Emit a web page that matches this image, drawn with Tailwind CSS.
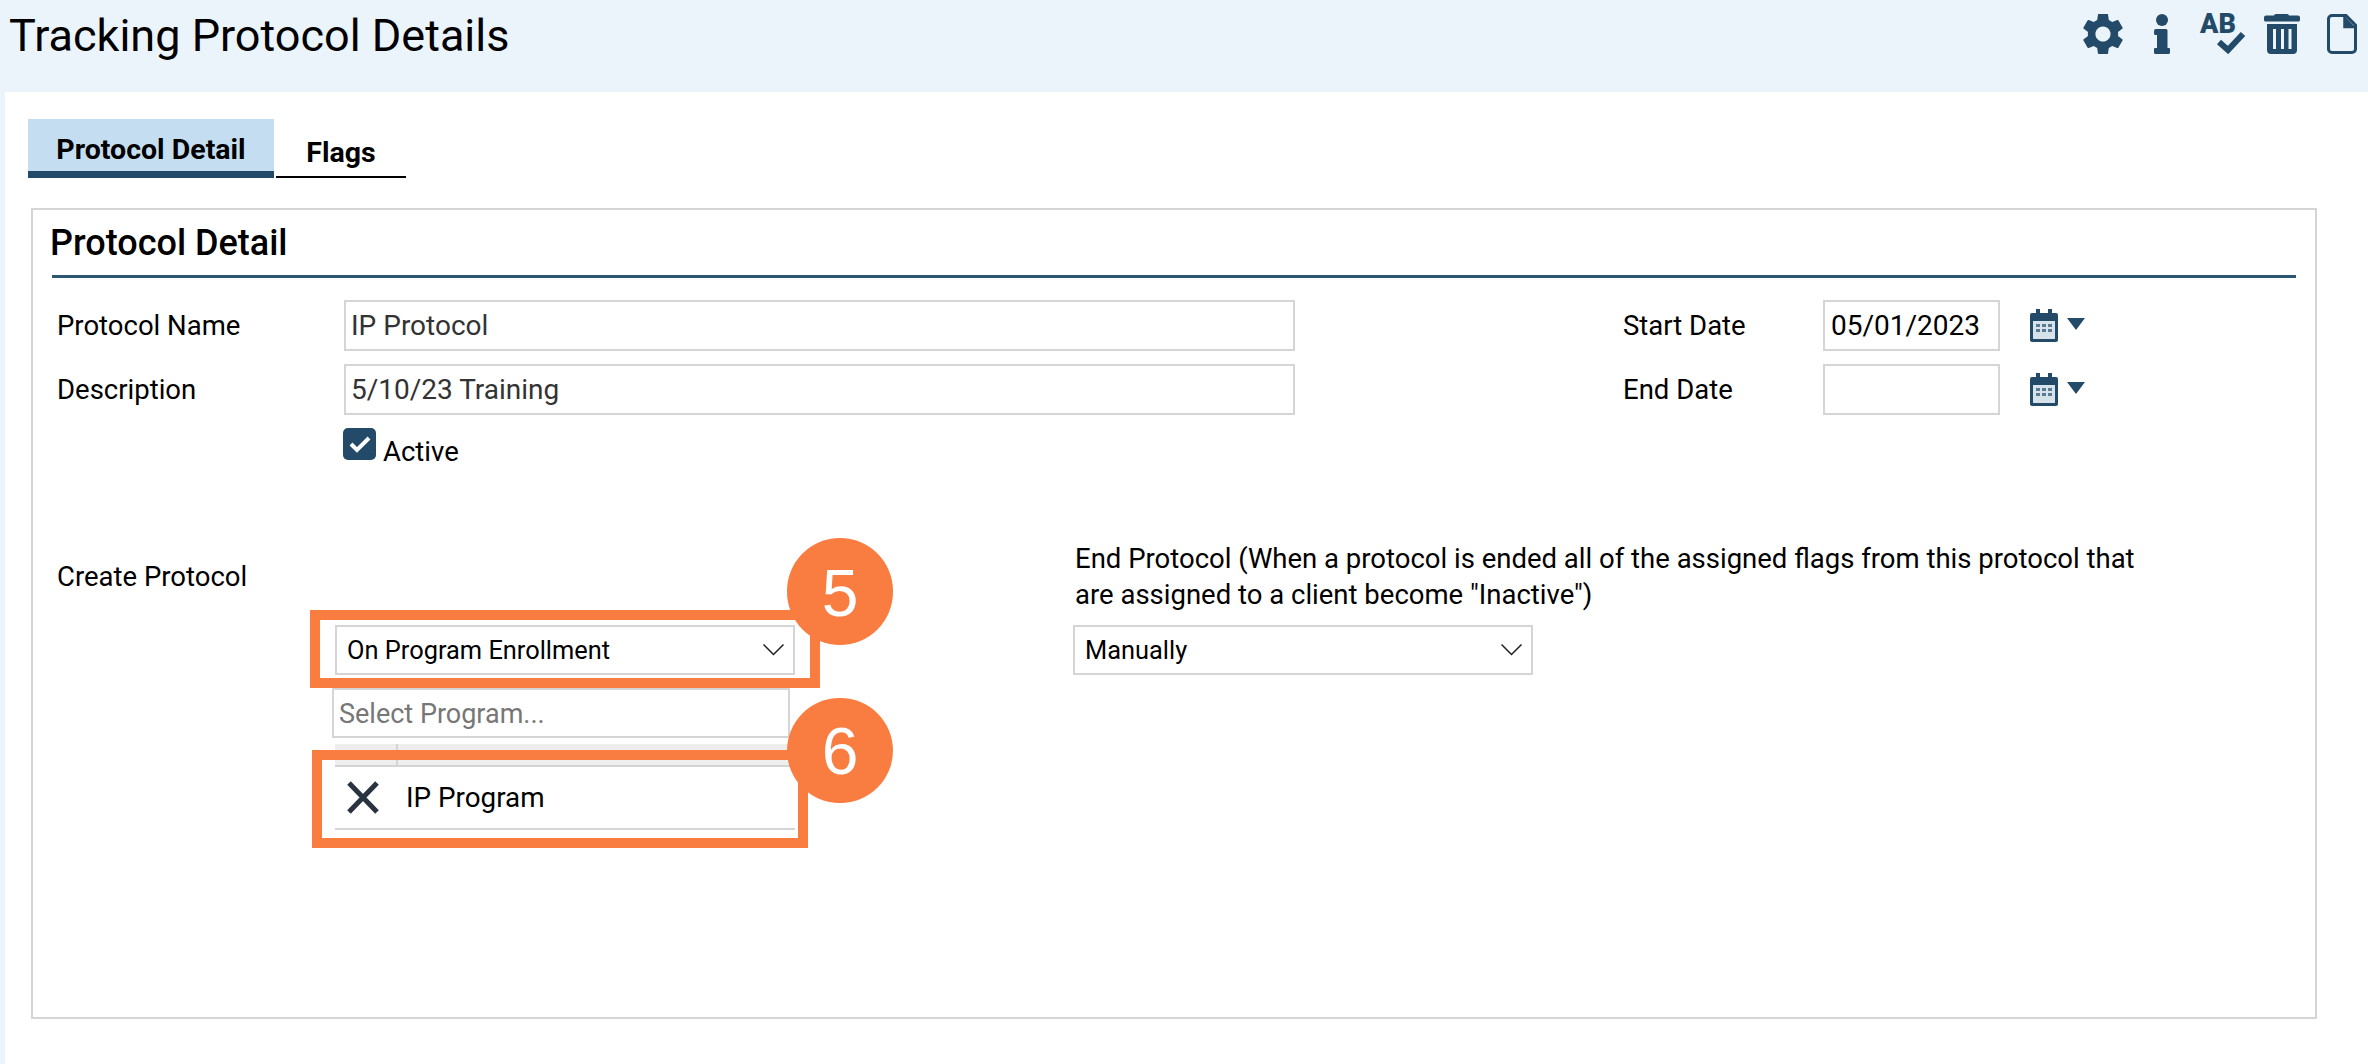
<!DOCTYPE html>
<html lang="en">
<head>
    <meta charset="UTF-8">
    <meta name="viewport" content="width=device-width, initial-scale=1.0">
    <script src="https://cdn.jsdelivr.net/npm/@tailwindcss/browser@4"></script>
    <title>Tracking Protocol Details</title>
</head>

<body class="bg-white">
    <div class="relative h-[1064px] w-[2368px] overflow-hidden bg-white font-['Roboto',sans-serif] text-[27.5px] text-black">
        <!-- page header -->
        <div class="flex h-[92px] items-start justify-between bg-[#ebf4fa] pl-[9px]">
            <h1 class="pt-[11px] text-[45px] leading-[50px]">Tracking Protocol Details</h1>
            <div class="flex pt-[14px] pr-[11px] text-[#234a68]">
                <svg class="h-[40px] w-[40px]" viewBox="2.5 2.5 19 19" fill="currentColor"><path d="M19.14 12.94c.04-.3.06-.61.06-.94 0-.32-.02-.64-.07-.94l2.03-1.58a.49.49 0 0 0 .12-.61l-1.92-3.32a.488.488 0 0 0-.59-.22l-2.39.96c-.5-.38-1.03-.7-1.62-.94l-.36-2.54a.484.484 0 0 0-.48-.41h-3.84c-.24 0-.43.17-.47.41l-.36 2.54c-.59.24-1.13.57-1.62.94l-2.39-.96c-.22-.08-.47 0-.59.22L2.74 8.87c-.12.21-.08.47.12.61l2.03 1.58c-.05.3-.09.63-.09.94s.02.64.07.94l-2.03 1.58a.49.49 0 0 0-.12.61l1.92 3.32c.12.22.37.29.59.22l2.39-.96c.5.38 1.03.7 1.62.94l.36 2.54c.05.24.24.41.48.41h3.84c.24 0 .44-.17.47-.41l.36-2.54c.59-.24 1.13-.56 1.62-.94l2.39.96c.22.08.47 0 .59-.22l1.92-3.32c.12-.22.07-.47-.12-.61l-2.01-1.58zM12 15.6c-1.98 0-3.6-1.62-3.6-3.6s1.62-3.6 3.6-3.6 3.6 1.62 3.6 3.6-1.62 3.6-3.6 3.6z"/></svg>
                <svg class="ml-[31px] h-[40px] w-[16px]" viewBox="0 0 16 40" fill="currentColor"><circle cx="8" cy="6" r="6"/><path d="M2 15h10a1.500 1.500 0 0 1 1.500 1.500V34H15a1 1 0 0 1 1 1v3.500a1.500 1.500 0 0 1-1.500 1.500H1.500A1.500 1.500 0 0 1 0 38.500V35a1 1 0 0 1 1-1h2V21H1.500A1.500 1.500 0 0 1 0 19.500V17a2 2 0 0 1 2-2z"/></svg>
                <div class="relative ml-[30px] h-[40px] w-[45px]">
                    <span class="absolute top-[-4px] left-0 text-[27px] leading-[28px] font-black">AB</span>
                    <svg class="absolute top-[17px] left-[17px] h-[23px] w-[28px]" viewBox="0 0 28 23" fill="none" stroke="currentColor" stroke-width="6"><path d="M2 11l9 8L26 3"/></svg>
                </div>
                <svg class="ml-[19px] h-[40px] w-[36px]" viewBox="0 0 36 40" fill="currentColor"><path d="M12 0h11a2 2 0 0 1 2 1.500h9a2 2 0 0 1 2 2V6a1.500 1.500 0 0 1-1.500 1.500h-33A1.500 1.500 0 0 1 0 6V3.500a2 2 0 0 1 2-2h8A2 2 0 0 1 12 0z"/><path fill-rule="evenodd" d="M3 10h30v26a4 4 0 0 1-4 4H7a4 4 0 0 1-4-4zM9 15v20h3V15zm8 0v20h3V15zm7.500 0v20h3V15z"/></svg>
                <svg class="ml-[27px] h-[40px] w-[30px]" viewBox="0 0 30 40" fill="none" stroke="currentColor" stroke-width="3"><path d="M19 1.500H5A3.500 3.500 0 0 0 1.500 5v30A3.500 3.500 0 0 0 5 38.500h20a3.500 3.500 0 0 0 3.500-3.500V11z"/><path d="M17 1.500V13h11" fill="currentColor" stroke="none"/><path d="M17.500 2v11h11" stroke-width="2.500"/></svg>
            </div>
        </div>

        <div class="h-[972px] border-l-[5px] border-[#ebf4fa] pt-[27px] pl-[23px]">
            <!-- tabs -->
            <div class="flex h-[59px]">
                <div class="flex w-[246px] justify-center border-b-[7px] border-[#234a68] bg-[#c5ddf0] pt-[13px] text-[28.5px] leading-[36px] font-bold">Protocol Detail</div>
                <div class="ml-[2px] flex w-[130px] justify-center border-b-2 border-black pt-[16px] text-[28.5px] leading-[36px] font-bold">Flags</div>
            </div>

            <!-- panel -->
            <div class="mt-[30px] ml-[3px] h-[811px] w-[2286px] border-2 border-[#d5d5d5] pt-[13px]">
                <h2 class="ml-[17px] text-[36px] leading-[40px] font-medium">Protocol Detail</h2>
                <div class="mt-[12px] ml-[19px] h-[3px] w-[2244px] bg-[#2c5573]"></div>

                <div class="mt-[22px] flex h-[51px] items-center">
                    <div class="ml-[24px] w-[287px]">Protocol Name</div>
                    <div class="flex h-[51px] w-[951px] items-center border-2 border-[#d5d5d5] pl-[5px] text-[28px] text-[#333]">IP Protocol</div>
                    <div class="ml-[328px] w-[200px]">Start Date</div>
                    <div class="flex h-[51px] w-[177px] items-center border-2 border-[#d5d5d5] pl-[6px] text-[28px]">05/01/2023</div>
                    <svg class="ml-[30px] h-[33px] w-[28px]" viewBox="0 0 28 33"><path fill="#234a68" d="M2 4h4V0h4v4h8V0h4v4h4a2 2 0 0 1 2 2v25a2 2 0 0 1-2 2H2a2 2 0 0 1-2-2V6a2 2 0 0 1 2-2z"/><rect x="3" y="12" width="22" height="18" fill="#d8e2ea"/><path fill="#5a7a92" d="M6 15h4v3H6zm6 0h4v3h-4zm6 0h4v3h-4zM6 20h4v3H6zm6 0h4v3h-4zm6 0h4v3h-4z"/></svg>
                    <svg class="mt-[-4px] ml-[9px] h-[12px] w-[18px]" viewBox="0 0 18 12" fill="#234a68"><path d="M0 0h18L9 12z"/></svg>
                </div>
                <div class="mt-[13px] flex h-[51px] items-center">
                    <div class="ml-[24px] w-[287px]">Description</div>
                    <div class="flex h-[51px] w-[951px] items-center border-2 border-[#d5d5d5] pl-[5px] text-[28px] text-[#333]">5/10/23 Training</div>
                    <div class="ml-[328px] w-[200px]">End Date</div>
                    <div class="h-[51px] w-[177px] border-2 border-[#d5d5d5]"></div>
                    <svg class="ml-[30px] h-[33px] w-[28px]" viewBox="0 0 28 33"><path fill="#234a68" d="M2 4h4V0h4v4h8V0h4v4h4a2 2 0 0 1 2 2v25a2 2 0 0 1-2 2H2a2 2 0 0 1-2-2V6a2 2 0 0 1 2-2z"/><rect x="3" y="12" width="22" height="18" fill="#d8e2ea"/><path fill="#5a7a92" d="M6 15h4v3H6zm6 0h4v3h-4zm6 0h4v3h-4zM6 20h4v3H6zm6 0h4v3h-4zm6 0h4v3h-4z"/></svg>
                    <svg class="mt-[-4px] ml-[9px] h-[12px] w-[18px]" viewBox="0 0 18 12" fill="#234a68"><path d="M0 0h18L9 12z"/></svg>
                </div>
                <div class="mt-[13px] ml-[310px] flex h-[46px] items-start">
                    <div class="flex h-[32px] w-[33px] items-center justify-center rounded-[5px] bg-[#234a68]">
                        <svg class="h-[18px] w-[22px]" viewBox="0 0 22 18" fill="none" stroke="white" stroke-width="4"><path d="M2 9l6 6L20 3"/></svg>
                    </div>
                    <span class="mt-[6px] ml-[7px] leading-[36px]">Active</span>
                </div>

                <!-- create / end protocol -->
                <div class="mt-[66px] flex">
                    <div class="w-[1040px]">
                        <div class="pt-[19px] pl-[24px] leading-[36px]">Create Protocol</div>
                        <div class="mt-[30px] ml-[302px] flex h-[50px] w-[460px] items-center justify-between border-2 border-[#d5d5d5] pr-[9px] pl-[10px] text-[25.4px]">
                            <span>On Program Enrollment</span>
                            <svg class="h-[12px] w-[21px]" viewBox="0 0 21 12" fill="none" stroke="#222" stroke-width="1.500"><path d="M.5.500l10 10 10-10"/></svg>
                        </div>
                        <div class="mt-[13px] ml-[299px] flex h-[50px] w-[458px] items-center border-2 border-[#d5d5d5] pt-[2px] pl-[5px] text-[27px] text-[#777]">Select Program...</div>
                        <div class="mt-[6px] ml-[302px] flex h-[23px] w-[455px] border-b-2 border-[#d5d5d5] bg-[#eeeeee]">
                            <div class="w-[63px] border-r-2 border-[#d5d5d5]"></div>
                        </div>
                        <div class="ml-[302px] flex h-[63px] w-[460px] items-center border-b-2 border-[#d5d5d5]">
                            <svg class="ml-[12px] h-[33px] w-[32px] blur-[0.7px]" viewBox="0 0 32 33" fill="none" stroke="#2a3340" stroke-width="5"><path d="M2 2l28 29M30 2L2 31"/></svg>
                            <span class="ml-[27px] text-[27.8px]">IP Program</span>
                        </div>
                    </div>
                    <div>
                        <div class="w-[1078px] pt-[1px] pl-[2px] leading-[36px]">End Protocol (When a protocol is ended all of the assigned flags from this protocol that are assigned to a client become "Inactive")</div>
                        <div class="mt-[12px] flex h-[50px] w-[460px] items-center justify-between border-2 border-[#d5d5d5] pr-[9px] pl-[10px] text-[25.4px]">
                            <span>Manually</span>
                            <svg class="h-[12px] w-[21px]" viewBox="0 0 21 12" fill="none" stroke="#222" stroke-width="1.500"><path d="M.5.500l10 10 10-10"/></svg>
                        </div>
                    </div>
                </div>
            </div>
        </div>

        <!-- annotation callouts -->
        <div class="absolute top-[610px] left-[310px] h-[78px] w-[510px] border-[10px] border-[#f97c40]"></div>
        <div class="absolute top-[750px] left-[312px] h-[98px] w-[496px] border-[10px] border-[#f97c40]"></div>
        <div class="absolute top-[538px] left-[787px] flex h-[107px] w-[106px] items-center justify-center rounded-full bg-[#f97c40] pt-[3px] font-['Liberation_Sans',sans-serif] text-[66px] text-white">5</div>
        <div class="absolute top-[698px] left-[787px] flex h-[105px] w-[106px] items-center justify-center rounded-full bg-[#f97c40] pt-[2px] font-['Liberation_Sans',sans-serif] text-[66px] text-white">6</div>
    </div>
</body>
</html>
